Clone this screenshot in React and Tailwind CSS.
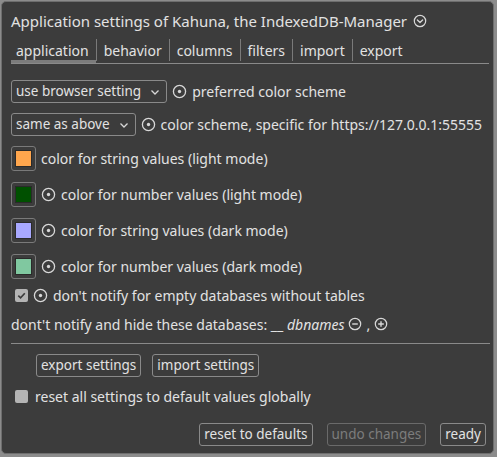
const FONT = { fontFamily: '"Noto Sans", "Open Sans", sans-serif' };

function Dot() {
  return (
    <svg width="15" height="15" viewBox="0 0 16 16" className="shrink-0">
      <circle cx="8" cy="8" r="6.5" fill="none" stroke="#d8d8d8" strokeWidth="1.4" />
      <circle cx="8" cy="8" r="1.8" fill="#d8d8d8" />
    </svg>
  );
}

function CircleIcon({ kind }) {
  return (
    <svg width="14" height="14" viewBox="0 0 16 16" className="shrink-0">
      <circle cx="8" cy="8" r="6.5" fill="none" stroke="#d8d8d8" strokeWidth="1.4" />
      {kind === 'down' && <path d="M5 6.8 L8 9.8 L11 6.8" fill="none" stroke="#d8d8d8" strokeWidth="1.5" strokeLinecap="round" strokeLinejoin="round" />}
      {kind === 'minus' && <path d="M4.8 8 H11.2" stroke="#d8d8d8" strokeWidth="1.6" />}
      {kind === 'plus' && <path d="M4.8 8 H11.2 M8 4.8 V11.2" stroke="#d8d8d8" strokeWidth="1.6" />}
    </svg>
  );
}

function Select({ label }) {
  return (
    <div className="flex items-center gap-[9px] h-[23px] pl-[4px] pr-[6px] border border-[#8a8a8a] rounded-[3px] shrink-0 text-[13.5px]">
      <span>{label}</span>
      <svg width="10" height="8" viewBox="0 0 10 8">
        <path d="M1.5 2.5 L5 6 L8.5 2.5" fill="none" stroke="#d8d8d8" strokeWidth="1.3" />
      </svg>
    </div>
  );
}

function Swatch({ color }) {
  return (
    <div className="w-[25px] h-[25px] border border-[#7a7a7a] rounded-[3px] p-[3px] shrink-0">
      <div className="w-full h-full border border-[#2a2a2a]" style={{ background: color }} />
    </div>
  );
}

function Btn({ children, disabled }) {
  return (
    <div className={`h-[23px] px-[4px] flex items-center border rounded-[3px] text-[13.5px] ${disabled ? 'border-[#6a6a6a] text-[#7d7d7d]' : 'border-[#8a8a8a]'}`}>
      {children}
    </div>
  );
}

function Check({ checked }) {
  return (
    <div className="w-[13px] h-[13px] rounded-[2px] bg-[#b4b4b4] flex items-center justify-center shrink-0">
      {checked && (
        <svg width="11" height="11" viewBox="0 0 12 12">
          <path d="M2.5 6.2 L5 8.6 L9.6 3.6" fill="none" stroke="#3c3c3c" strokeWidth="1.8" />
        </svg>
      )}
    </div>
  );
}

const TABS = ['application', 'behavior', 'columns', 'filters', 'import', 'export'];

const COLORS = [
  { c: '#ffa64d', t: 'color for string values (light mode)', dot: false },
  { c: '#005000', t: 'color for number values (light mode)', dot: true },
  { c: '#a8a8ff', t: 'color for string values (dark mode)', dot: true },
  { c: '#80c8a0', t: 'color for number values (dark mode)', dot: true },
];

export default function App() {
  return (
    <div className="w-[497px] h-[457px] bg-[#8c8c8c] pl-[1px] pt-[1px]" style={FONT}>
      <div className="w-[493px] h-[453px] bg-[#3c3c3c] rounded-[5px] border border-[#6e6e6e] text-[#e2e2e2] text-[14px] pl-[9px] pr-[3px] pt-[8px] flex flex-col">
        <div className="flex items-center gap-[6px] text-[15px] h-[22px]">
          <span>Application settings of Kahuna, the IndexedDB-Manager</span>
          <CircleIcon kind="down" />
        </div>

        <div className="flex items-end mt-[5px] mr-[1px] border-b border-[#8a8a8a] h-[27px]">
          {TABS.map((t, i) => (
            <div key={t} className={`flex items-center h-[22px] px-[7px] ${i > 0 ? 'border-l border-[#7a7a7a] mb-[2px]' : 'border-b-[3px] border-[#7c7c7c] pl-[5px]'}`}>
              {t}
            </div>
          ))}
        </div>

        <div className="flex flex-col mt-[16px]">
          <div className="flex items-center gap-[5px] h-[23px]">
            <Select label="use browser setting" />
            <Dot />
            <span>preferred color scheme</span>
          </div>
          <div className="flex items-center gap-[5px] h-[23px] mt-[10px]">
            <Select label="same as above" />
            <Dot />
            <span className="whitespace-nowrap">color scheme, specific for https://127.0.0.1:55555</span>
          </div>
          {COLORS.map((r, i) => (
            <div key={r.t} className={`flex items-center gap-[5px] h-[25px] ${i === 0 ? 'mt-[10px]' : 'mt-[11px]'}`}>
              <Swatch color={r.c} />
              {r.dot && <Dot />}
              <span>{r.t}</span>
            </div>
          ))}
          <div className="flex items-center gap-[5px] h-[20px] mt-[6px] pl-[4px]">
            <Check checked />
            <Dot />
            <span>don't notify for empty databases without tables</span>
          </div>
          <div className="flex items-center gap-[4px] h-[20px] mt-[9px]">
            <span>dont't notify and hide these databases: __ <i className="font-normal">dbnames</i></span>
            <CircleIcon kind="minus" />
            <span>,</span>
            <CircleIcon kind="plus" />
          </div>
        </div>

        <div className="border-t border-[#8a8a8a] mt-[9px]" />

        <div className="flex items-center gap-[11px] pl-[25px] mt-[10px]">
          <Btn>export settings</Btn>
          <Btn>import settings</Btn>
        </div>
        <div className="flex items-center gap-[7px] pl-[4px] mt-[9px] h-[20px]">
          <Check />
          <span>reset all settings to default values globally</span>
        </div>
        <div className="flex items-center justify-end gap-[14px] mt-[17px] pr-[4px]">
          <Btn>reset to defaults</Btn>
          <Btn disabled>undo changes</Btn>
          <Btn>ready</Btn>
        </div>
      </div>
    </div>
  );
}
